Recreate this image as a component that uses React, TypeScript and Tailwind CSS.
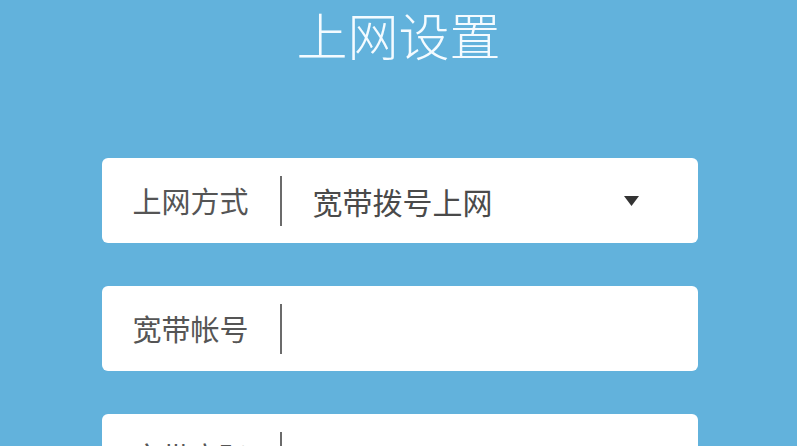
import React from "react";

const font = { fontFamily: '"Noto Sans CJK SC", "Noto Sans", sans-serif' };

function Row({ label, value, arrow }: { label: string; value?: string; arrow?: boolean }) {
  return (
    <div className="flex h-[85px] w-[596px] shrink-0 items-center rounded-[6px] bg-white">
      <div className="w-[178px] shrink-0 pl-[31px] text-[29px] leading-none text-[#555555]">{label}</div>
      <div className="h-[50px] w-[2px] shrink-0 bg-[#6b6b6b]" />
      <div className="flex-1 pl-[31px] text-[30px] leading-none text-[#4a4a4a]">{value}</div>
      {arrow && (
        <svg width="15" height="10" viewBox="0 0 15 10" className="mr-[59px]">
          <polygon points="0,0 15,0 7.5,10" fill="#333333" />
        </svg>
      )}
    </div>
  );
}

export default function App() {
  return (
    <div className="flex h-[446px] w-[797px] flex-col items-center overflow-hidden bg-[#62b2dc]" style={font}>
      <div className="mt-[4px] h-[60px] text-[51px] font-light leading-[60px] text-[#f4fbff]">上网设置</div>
      <div className="mt-[94px] flex flex-col gap-[43px] pl-[2px]">
        <Row label="上网方式" value="宽带拨号上网" arrow />
        <Row label="宽带帐号" />
        <Row label="宽带密码" />
      </div>
    </div>
  );
}
